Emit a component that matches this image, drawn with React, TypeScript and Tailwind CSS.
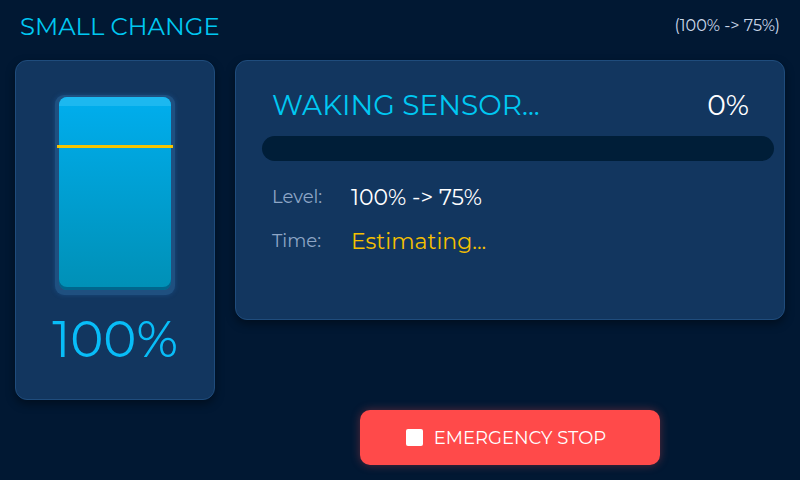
import React from "react";

export default function App() {
  return (
    <div
      className="w-[800px] h-[480px] bg-[#011833] overflow-hidden flex flex-col"
      style={{ fontFamily: '"Montserrat", "DejaVu Sans", sans-serif' }}
    >
      <div className="h-[50px] flex items-center justify-between pl-[20px] pr-[20px] pt-[2px]">
        <div className="text-[24.3px] text-[#00c8f2] leading-none">SMALL CHANGE</div>
        <div className="text-[16px] text-[#c9d6e8] leading-none">(100% -&gt; 75%)</div>
      </div>
      <div className="flex gap-[20px] pl-[15px] pr-[15px] pt-[10px]">
        <div className="w-[200px] h-[340px] rounded-[12px] bg-[#12365f] border border-[#1f4c7c] flex flex-col items-center pt-[34px] shadow-[0_4px_10px_rgba(0,0,0,0.4)]">
          <div className="relative w-[120px] h-[200px] rounded-[9px] bg-[#1f5080] p-[2px] pl-[4px] pr-[4px] shadow-[0_0_5px_rgba(40,120,200,0.3)]">
            <div className="w-full h-[193px] rounded-[8px] bg-gradient-to-b from-[#00aeee] to-[#0090b6] shadow-[inset_0_-3px_0_rgba(0,50,90,0.45)] overflow-hidden">
              <div className="h-[9px] bg-[#1cb8f0] rounded-t-[8px]" />
            </div>
            <div className="absolute left-[2px] right-[2px] top-[50px] h-[3px] bg-[#f5c400]" />
          </div>
          <div className="mt-[20px] text-[50px] leading-none text-[#08bdf8]">100%</div>
        </div>
        <div className="w-[550px] h-[260px] rounded-[12px] bg-[#12365f] border border-[#1f4c7c] pl-[26px] pr-[10px] pt-[30px] flex flex-col shadow-[0_4px_10px_rgba(0,0,0,0.4)]">
          <div className="flex items-center justify-between pl-[10px] pr-[25px]">
            <div className="text-[28px] leading-none text-[#00c8f2]">WAKING SENSOR...</div>
            <div className="text-[28px] leading-none text-white">0%</div>
          </div>
          <div className="mt-[17px] h-[25px] rounded-full bg-[#001e38]" />
          <div className="mt-[23px] pl-[10px] flex items-center h-[26px]">
            <div className="w-[79px] text-[18px] text-[#8ea6c6]">Level:</div>
            <div className="text-[22px] text-white">100% -&gt; 75%</div>
          </div>
          <div className="mt-[18px] pl-[10px] flex items-center h-[26px]">
            <div className="w-[79px] text-[18px] text-[#8ea6c6]">Time:</div>
            <div className="text-[22px] text-[#f5c000]">Estimating...</div>
          </div>
        </div>
      </div>
      <div className="flex justify-center pl-[280px] pt-[10px]">
        <div className="ml-[-60px] w-[300px] h-[55px] rounded-[10px] bg-[#ff4a4a] flex items-center justify-center gap-[11px] pr-[8px] shadow-[0_0_10px_rgba(255,74,74,0.35)]">
          <div className="w-[17px] h-[17px] rounded-[2px] bg-white" />
          <div className="text-[18px] text-white leading-none">EMERGENCY STOP</div>
        </div>
      </div>
    </div>
  );
}
